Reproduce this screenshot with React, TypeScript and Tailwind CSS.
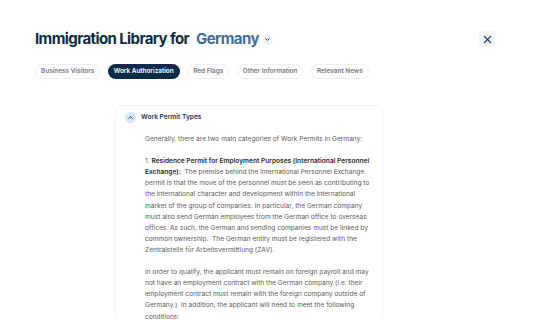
import { ChevronDown, ChevronUp, X } from 'lucide-react'

const tabs = ['Business Visitors', 'Work Authorization', 'Red Flags', 'Other Information', 'Relevant News']

export default function App() {
  const active = 'Work Authorization'

  return (
    <div
      className="h-[320px] w-[538px] overflow-hidden bg-white px-[35px] pt-[29px]"
      style={{ fontFamily: 'Inter, "Noto Sans", sans-serif' }}
    >
      <div className="flex items-center justify-between">
        <div className="flex items-center">
          <h1 className="text-[15px] font-bold leading-[20px] tracking-[-0.6px] text-[#0c2a44]">
            Immigration Library for
          </h1>
          <span className="ml-[7px] text-[15px] font-bold leading-[20px] tracking-[-0.6px] text-[#3d6d98]">
            Germany
          </span>
          <span className="ml-[3px] mt-[1px] flex h-[11px] w-[11px] items-center justify-center rounded-full bg-[#f1f2f4]">
            <ChevronDown size={7} strokeWidth={3} className="text-[#0c2a44]" />
          </span>
        </div>
        <button
          type="button"
          className="mr-[8px] flex h-[16px] w-[16px] items-center justify-center rounded-[3px] bg-[#f3f5f7]"
        >
          <X size={13} strokeWidth={2} className="text-[#1d3d5a]" />
        </button>
      </div>

      <div className="mt-[15px] flex gap-[7.5px]">
        {tabs.map((tab) => (
          <button
            key={tab}
            type="button"
            className={
              tab === active
                ? 'h-[15px] rounded-full bg-[#0b2c48] px-[6px] text-[6.4px] font-semibold text-white'
                : 'h-[15px] rounded-full border border-[#eceef0] px-[5px] text-[6.4px] font-semibold text-[#74787d]'
            }
          >
            {tab}
          </button>
        ))}
      </div>

      <div className="ml-[80px] mt-[26px] w-[268px] rounded-[8px] border border-[#f2f3f4] pt-[6px]">
        <div className="flex items-center gap-[5px] pl-[9px]">
          <span className="flex h-[11px] w-[11px] items-center justify-center rounded-full bg-[#d5e7f7]">
            <ChevronUp size={7} strokeWidth={3} className="text-[#0c2a44]" />
          </span>
          <span className="text-[6.6px] font-semibold leading-[11px] text-[#1f3549]">Work Permit Types</span>
        </div>
        <div className="ml-[29px] mt-[11px] w-[228px] text-[6.6px] leading-[11.1px] text-[#5e5955]">
          <p>Generally, there are two main categories of Work Permits in Germany:</p>
          <p className="mt-[11.1px]">
            1.{' '}
            <span className="font-semibold text-[#2f2b28]">
              Residence Permit for Employment Purposes (International Personnel Exchange):
            </span>
            &nbsp; The premise behind the International Personnel Exchange permit is that the move of the
            personnel must be seen as contributing to the international character and development within
            the international market of the group of companies. In particular, the German company must also
            send German employees from the German office to overseas offices. As such, the German and
            sending companies must be linked by common ownership.&nbsp; The German entity must be
            registered with the Zentralstelle für Arbeitsvermittlung (ZAV).
          </p>
          <p className="mt-[11.1px]">
            In order to qualify, the applicant must remain on foreign payroll and may not have an employment
            contract with the German company (i.e. their employment contract must remain with the foreign
            company outside of Germany.)&nbsp; In addition, the applicant will need to meet the following
            conditions:
          </p>
        </div>
      </div>
    </div>
  )
}
